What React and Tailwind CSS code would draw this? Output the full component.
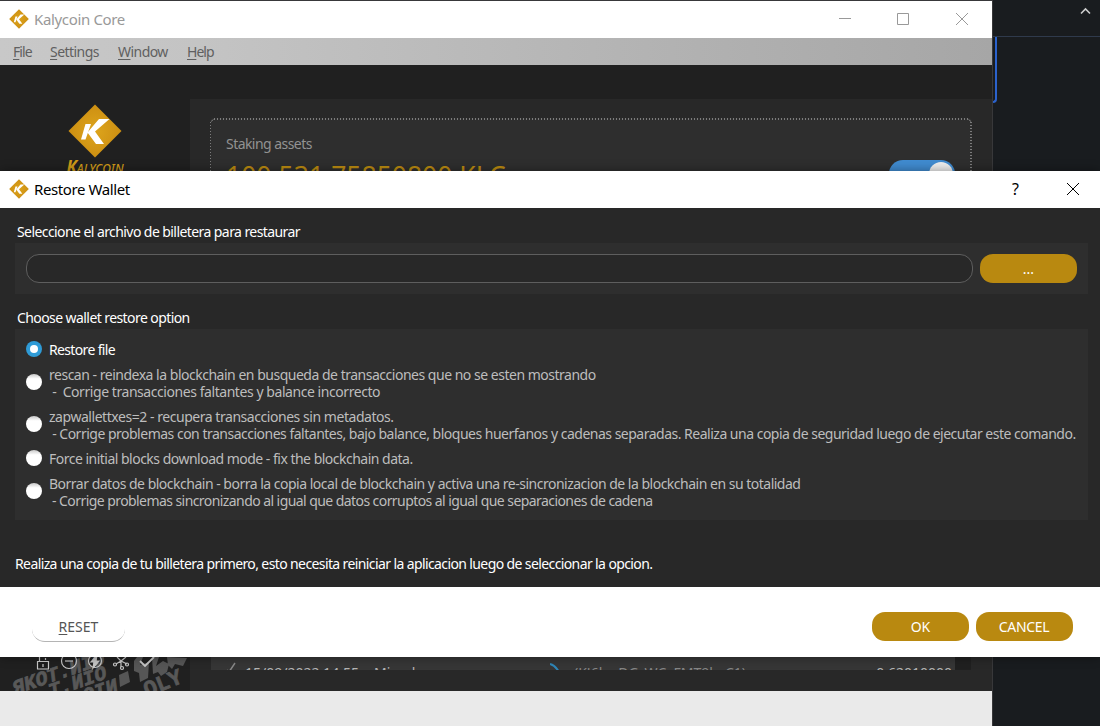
import React from "react";

function CoinLogo({ size, className = "" }) {
  return (
    <svg width={size} height={size} viewBox="0 0 54 54" className={"shrink-0 " + className}>
      <defs>
        <radialGradient id={"gold" + size}>
          <stop offset="0" stopColor="#dda51c" />
          <stop offset="1" stopColor="#cd8f12" />
        </radialGradient>
      </defs>
      <path d="M27 .5 53.500 27 27 53.500 .5 27Z" fill={"url(#gold" + size + ")"} />
      <path d="M31 15H41.500L27 27.500 36 40H28L19.500 28.500Z" fill="#fff" />
      <path d="M17.500 20H23L17.500 35.500H13Z" fill="#fff" />
    </svg>
  );
}

function MenuItem({ first, rest, className }) {
  return (
    <span className={"whitespace-pre " + className}>
      <span className="underline underline-offset-2">{first}</span>
      {rest}
    </span>
  );
}

function Radio({ checked, className }) {
  return checked ? (
    <span className={"flex h-4 w-4 shrink-0 items-center justify-center self-start rounded-full bg-[#2f9bd6] " + className}>
      <span className="h-2 w-2 rounded-full bg-white" />
    </span>
  ) : (
    <span className={"h-4 w-4 shrink-0 self-start rounded-full bg-linear-to-b from-[#c8c8c8] via-white via-30% to-white " + className} />
  );
}

function Option({ checked, lines, className }) {
  return (
    <label className={"flex items-center gap-[7px] " + className}>
      <Radio checked={checked} className={lines.length > 1 ? "mt-2" : ""} />
      <span className={"flex flex-col " + (checked ? "text-white" : "text-[#bdbdbd]")}>
        {lines.map((l) => (
          <span key={l[0]} className={"block h-[17px] whitespace-pre leading-[17px] " + l[1]}>
            {l[0]}
          </span>
        ))}
      </span>
    </label>
  );
}

function GoldButton({ children, className = "" }) {
  return (
    <button className={"flex h-[29px] w-[97px] items-center justify-center rounded-[13px] bg-[#b98910] text-[14px] text-white " + className}>
      {children}
    </button>
  );
}

function SideFooter() {
  return (
    <svg className="block" width="190" height="34" viewBox="0 0 190 34" fill="none">
      <g fill="#585858" fontFamily="Liberation Mono" fontWeight="bold" fontSize="20" stroke="#585858" strokeWidth=".8">
        <text transform="translate(14 38) rotate(-19) skewX(-12)">ЯKOT.ИIO</text>
        <text transform="translate(50 41) rotate(-19) skewX(-12)">T.ИIO</text>
        <text transform="translate(84 46) rotate(-19) skewX(-12)">OIИ</text>
        <text transform="translate(147 40) rotate(-22)" fontSize="22">OLY</text>
      </g>
      <g fill="#565656">
        <path d="M119 18l9-4 2 11-10 5zM134 4l3-4h6l-3 8 9-3-1 16-8 4-1-9-5-2zM152 0h7l-3 9 7-5 6 3-2 8-6 4-3-4-5 2zM167 0l20 1-4 8-8-2-3 5-4-4z" />
      </g>
      <path d="M36 3h14v10H36z" fill="#1c1c1c" />
      <g stroke="#c8c8c8" strokeWidth="1.200">
        <path d="M37.500 4.500h11v7.500h-11zM39.500 4V0M45.500 3V1M43 7v3" />
        <circle cx="69" cy="4" r="7.500" />
        <path d="M65 4h8" />
        <circle cx="95" cy="4" r="6.500" />
        <path d="M97-2 91 5h3l-1 6 6-7h-3z" fill="#c8c8c8" />
        <path d="M121 4 116 7M121 4l6 3M121 4V10M121 4l-4-4M121 4l5-4" />
        <circle cx="115" cy="7.500" r="1.500" />
        <circle cx="127" cy="7.500" r="1.500" />
        <circle cx="122" cy="11" r="1.500" />
        <path d="m140 4 5 5 9-9" strokeWidth="1.800" />
      </g>
    </svg>
  );
}

function MainWindow() {
  return (
    <div className="absolute left-0 top-0 flex h-[726px] w-[993px] flex-col border-r border-t border-[#38383a] bg-[#202020]">
      <div className="flex h-[37px] shrink-0 items-center bg-white pl-[9px]">
        <CoinLogo size={20} className="mt-2 self-start" />
        <span className="ml-[5px] flex-1 text-[15px] tracking-[-0.35px] text-[#999]">Kalycoin Core</span>
        <svg width="160" height="37" fill="none" stroke="#999" className="shrink-0">
          <path d="M7 17.500h12M65.500 12.500h11v11h-11zM124 12l12 12M136 12l-12 12" />
        </svg>
      </div>
      <div className="flex h-[27px] shrink-0 items-center bg-linear-to-r from-[#c8c8c8] via-[#c4c4c4] via-20% to-[#a6a6a6] pl-[13px] text-[14px] text-[#606060]">
        <MenuItem first="F" rest="ile" className="w-[37px] tracking-[-0.95px]" />
        <MenuItem first="S" rest="ettings" className="w-[68px] tracking-[-0.55px]" />
        <MenuItem first="W" rest="indow" className="w-[69px] tracking-[-0.55px]" />
        <MenuItem first="H" rest="elp" className="tracking-[-1px]" />
      </div>
      <div className="flex h-[626px] shrink-0">
        <div className="flex w-[190px] shrink-0 flex-col justify-between">
          <div className="flex flex-col items-center pt-[39px]">
            <CoinLogo size={54} />
            <span className="text-[17px] font-bold italic leading-[18px] text-[#cf9a18]">
              K<span className="text-[12px] font-medium">ALYCOIN</span>
            </span>
          </div>
          <SideFooter />
        </div>
        <div className="mt-[34px] flex w-[802px] flex-col justify-between bg-[#282828] pb-[21px]">
          <div className="relative ml-5 mt-[19px] h-[200px] w-[762px] rounded bg-[#2e2e2e] pl-4 pr-[17px] pt-4">
            <svg className="absolute inset-0" width="762" height="200" fill="none" stroke="#7c7c7c">
              <path d="M4 1H759" strokeWidth="2" strokeDasharray="1 2" />
              <path d="M.5 4V200" strokeDasharray="1 2" />
              <path d="M761 4V200" strokeWidth="2" strokeDasharray="1 2" />
              <path d="M1 3.500 3.500 1.500M758.500 1.500 761 3.500" />
            </svg>
            <div className="text-[14px] leading-5 tracking-[-0.55px] text-[#929292]">Staking assets</div>
            <div className="flex justify-between">
              <span className="mt-[7px] whitespace-pre text-[26.5px] leading-[30px] text-[#b98910]">100.531,75850800 KLC</span>
              <span className="mt-[6px] flex h-7 w-[66px] justify-end rounded-full bg-[#408bd0] p-[2px]">
                <span className="h-6 w-6 rounded-full bg-[#eee]" />
              </span>
            </div>
          </div>
          <div className="ml-[21px] flex h-[60px] w-[760px] overflow-hidden bg-[#202020]">
            <div className="flex w-[744px] items-end whitespace-pre bg-[#363636] text-[14px] leading-4 text-[#b4b4b4]">
              <div className="-mb-[11px] flex w-full items-start">
                <svg className="-mt-[3px] ml-[15px] mr-[9px]" width="10" height="14" fill="none" stroke="#888" strokeWidth="1.500">
                  <path d="M1 8l2 2 6-9" />
                </svg>
                <span className="w-[129px]">15/09/2022 14:55</span>
                <span className="w-[176px]">Mined</span>
                <svg className="-mt-[2px] mr-[14px]" width="10" height="14" fill="none" stroke="#2f86b8" strokeWidth="2">
                  <path d="M0 1q5 1 9 8" />
                </svg>
                <span className="flex-1 text-[#858585]">(KJ6hwDGrWCyFMT9hyC1)</span>
                <span className="mr-[3px]">0.62010000</span>
              </div>
            </div>
          </div>
        </div>
      </div>
      <div className="flex-1 bg-[#eaeaea]" />
    </div>
  );
}

function Dialog() {
  return (
    <div className="absolute left-0 top-[171px] flex h-[486px] w-[1100px] flex-col bg-[#282828] shadow-[0_0_10px_rgba(0,0,0,0.4)]">
      <div className="flex h-[37px] shrink-0 items-center bg-white pl-[9px]">
        <CoinLogo size={20} className="mt-2 self-start" />
        <span className="ml-[5px] flex-1 text-[15px] tracking-[-0.4px] text-black">Restore Wallet</span>
        <span className="mb-px w-[9px] text-[16px] text-black">?</span>
        <svg width="79" height="37" fill="none" stroke="#000" className="shrink-0">
          <path d="M46 12l12 12M58 12l-12 12" />
        </svg>
      </div>
      <div className="flex h-[379px] flex-col pl-[15px] text-[14px] text-white">
        <div className="ml-[2px] mt-[15px] h-[20px] leading-[18px] tracking-[-0.575px]">Seleccione el archivo de billetera para restaurar</div>
        <div className="flex h-[51px] w-[1073px] items-center gap-[7px] bg-[#2e2e2e] pl-[11px]">
          <div className="h-[29px] w-[947px] rounded-[13px] border border-[#5e5e5e] bg-[#282828]" />
          <GoldButton>...</GoldButton>
        </div>
        <div className="ml-[2px] mt-[15px] h-[20px] leading-[18px] tracking-[-0.58px]">Choose wallet restore option</div>
        <div className="h-[191px] w-[1073px] bg-[#2e2e2e] pl-[11px] pt-3">
          <Option checked className="" lines={[["Restore file", "tracking-[-0.65px]"]]} />
          <Option
            className="mt-2"
            lines={[
              ["rescan - reindexa la blockchain en busqueda de transacciones que no se esten mostrando", "tracking-[-0.488px]"],
              [" -  Corrige transacciones faltantes y balance incorrecto", "tracking-[-0.44px]"],
            ]}
          />
          <Option
            className="mt-2"
            lines={[
              ["zapwallettxes=2 - recupera transacciones sin metadatos.", "tracking-[-0.455px]"],
              [
                " - Corrige problemas con transacciones faltantes, bajo balance, bloques huerfanos y cadenas separadas. Realiza una copia de seguridad luego de ejecutar este comando.",
                "tracking-[-0.5px]",
              ],
            ]}
          />
          <Option className="mt-2" lines={[["Force initial blocks download mode - fix the blockchain data.", "tracking-[-0.51px]"]]} />
          <Option
            className="mt-2"
            lines={[
              ["Borrar datos de blockchain - borra la copia local de blockchain y activa una re-sincronizacion de la blockchain en su totalidad", "tracking-[-0.498px]"],
              [" - Corrige problemas sincronizando al igual que datos corruptos al igual que separaciones de cadena", "tracking-[-0.57px]"],
            ]}
          />
        </div>
        <div className="mt-[35px] leading-[18px] tracking-[-0.61px]">
          Realiza una copia de tu billetera primero, esto necesita reiniciar la aplicacion luego de seleccionar la opcion.
        </div>
      </div>
      <div className="flex h-[70px] items-start bg-white pt-[25px]">
        <button className="ml-[32px] flex h-[30px] w-[93px] items-center justify-center rounded-[13px] border-b border-[#b4b4b4] text-[14px] text-[#555]">
          <span className="whitespace-pre">
            <span className="underline underline-offset-2">R</span>ESET
          </span>
        </button>
        <div className="ml-[747px] flex gap-[7px]">
          <GoldButton>OK</GoldButton>
          <GoldButton className="pr-px tracking-[-0.3px]">CANCEL</GoldButton>
        </div>
      </div>
    </div>
  );
}

function Backdrop() {
  return (
    <div className="flex h-[726px] flex-col pl-[993px]">
      <div className="flex h-[37px] justify-end border-b border-[#2f3a4c] pr-2">
        <svg width="13" height="20" fill="none" stroke="#ccc" strokeWidth="1.600">
          <path d="M2 13.500 6.500 9 11 13.500" />
        </svg>
      </div>
      <div className="h-[66px] w-[4px] rounded-br-[4px] border-b-2 border-r-2 border-[#2b62cc]" />
    </div>
  );
}

export default function App() {
  return (
    <div className="relative h-[726px] w-[1100px] overflow-hidden bg-[#191c1f] font-['Noto_Sans',sans-serif]">
      <Backdrop />
      <MainWindow />
      <Dialog />
    </div>
  );
}
